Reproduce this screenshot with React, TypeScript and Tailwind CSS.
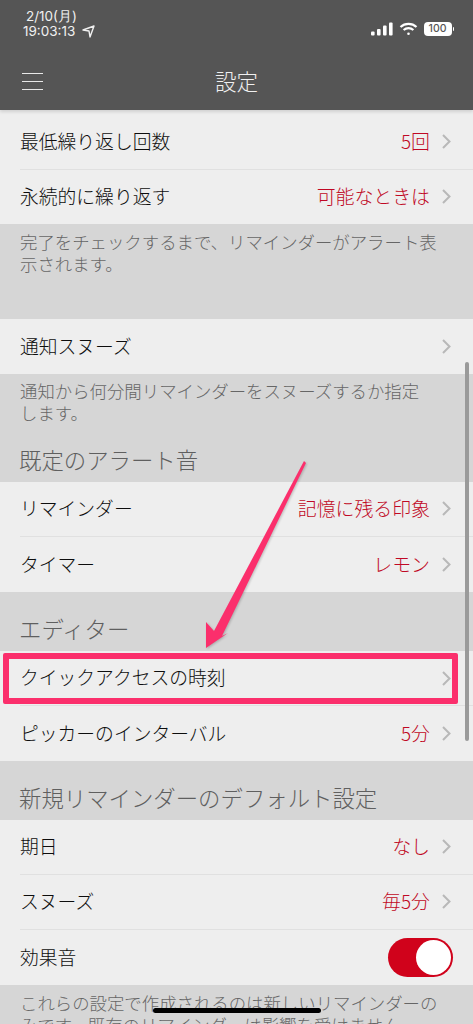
const jp = "font-['Noto_Sans_CJK_JP','Noto_Sans',sans-serif]";

const Chevron = () => (
  <svg width="9" height="15" viewBox="0 0 9 15" fill="none" stroke="#b8b8b8" strokeWidth="2">
    <path d="M1 1 L7.5 7.5 L1 14" />
  </svg>
);

const Row = ({
  label,
  value,
  last,
  height = "h-[55px]",
}: {
  label: string;
  value?: string;
  last?: boolean;
  height?: string;
}) => (
  <div className="pl-5">
    <div
      className={`flex items-center justify-between pr-[22px] ${height} ${last ? "" : "border-b border-[#e0e0e0]"}`}
    >
      <span className="pb-px text-[18.8px] font-light text-[#0d0d0d]">{label}</span>
      <div className="flex items-center gap-[12px]">
        {value && <span className="pb-px text-[18.9px] font-light text-[#c00824]">{value}</span>}
        <Chevron />
      </div>
    </div>
  </div>
);

const Group = ({ children, className = "" }: { children: React.ReactNode; className?: string }) => (
  <div className={`bg-[#eeeeee] ${className}`}>{children}</div>
);

const Note = ({ children, className }: { children: React.ReactNode; className: string }) => (
  <p className={`px-5 text-[17.4px] font-light leading-[21.5px] text-[#666666] ${className}`}>{children}</p>
);

const Heading = ({ children, className }: { children: React.ReactNode; className: string }) => (
  <h2 className={`pl-[19px] text-[22.4px] font-light leading-[30px] text-[#5f5f5f] ${className}`}>{children}</h2>
);

export default function App() {
  return (
    <div className={`relative h-[1024px] w-[473px] overflow-hidden bg-[#d6d6d6] ${jp}`}>
      <header className="relative z-10 h-[110px] bg-[#555555] text-white shadow-[0_2px_3px_rgba(0,0,0,0.12)]">
        <div className="flex items-start justify-between pl-[23px] pr-[19px] pt-[9px]">
          <div className="font-['Inter',sans-serif] text-[13.5px] leading-[15px] text-[#f0f0f0]">
            <div className="pl-[3px]">2/10(月)</div>
            <div className="flex items-center gap-[7px]">
              19:03:13
              <svg width="13" height="13" viewBox="0 0 13 13" fill="none" stroke="#f0f0f0" strokeWidth="1.4">
                <path d="M1 5 L12 1 L8 12 L7 6 Z" strokeLinejoin="round" />
              </svg>
            </div>
          </div>
          <div className="mt-[13px] flex items-center gap-[6px]">
            <svg width="22" height="14" viewBox="0 0 22 14" fill="#ffffff">
              <rect x="0" y="9.5" width="3.6" height="4" rx="1" />
              <rect x="6" y="7" width="3.6" height="6.5" rx="1" />
              <rect x="12" y="3.5" width="3.6" height="10" rx="1" />
              <rect x="18" y="0.5" width="3.6" height="13" rx="1" />
            </svg>
            <svg width="19" height="14" viewBox="0 0 19 14" fill="none" stroke="#ffffff" strokeWidth="2.2">
              <path d="M1.5 5 C6 0.8 13 0.8 17.5 5" />
              <path d="M4.6 8 C7.4 5.6 11.6 5.6 14.4 8" />
              <circle cx="9.5" cy="11.8" r="1.3" fill="#ffffff" stroke="none" />
            </svg>
            <div className="flex items-center">
              <div className="flex h-[14px] w-[28px] items-center justify-center rounded-[4px] bg-white font-['Inter',sans-serif] text-[10.5px] font-medium text-[#555555]">
                100
              </div>
              <div className="ml-px h-[4px] w-[1.5px] rounded-r-sm bg-white" />
            </div>
          </div>
        </div>
        <div className="relative mt-[27px] flex h-[30px] items-center justify-center">
          <div className="absolute left-[22px] top-[7px] flex w-[21px] flex-col gap-[7px]">
            <div className="h-px bg-[#e8e8e8]" />
            <div className="h-px bg-[#e8e8e8]" />
            <div className="h-px bg-[#e8e8e8]" />
          </div>
          <h1 className="text-[21.5px] font-light text-[#f0f0f0]">設定</h1>
        </div>
      </header>

      <Group className="pt-[5px]">
        <Row label="最低繰り返し回数" value="5回" />
        <Row label="永続的に繰り返す" value="可能なときは" last height="h-[54px]" />
      </Group>
      <Note className="h-[95px] pt-[7px]">
        完了をチェックするまで、リマインダーがアラート表示されます。
      </Note>
      <Group>
        <Row label="通知スヌーズ" last />
      </Group>
      <Note className="h-[62px] pt-[6px]">
        通知から何分間リマインダーをスヌーズするか指定
        <br />
        します。
      </Note>
      <Heading className="h-[46px] pt-[8px]">既定のアラート音</Heading>
      <Group>
        <Row label="リマインダー" value="記憶に残る印象" />
        <Row label="タイマー" value="レモン" last />
      </Group>
      <Heading className="h-[59px] pt-[21px]">エディター</Heading>
      <Group>
        <Row label="クイックアクセスの時刻" />
        <Row label="ピッカーのインターバル" value="5分" last />
      </Group>
      <Heading className="h-[59px] pt-[21px]">新規リマインダーのデフォルト設定</Heading>
      <Group>
        <Row label="期日" value="なし" />
        <Row label="スヌーズ" value="毎5分" />
        <div className="flex h-[55px] items-center justify-between pl-5 pr-[20px]">
          <span className="pb-px text-[18.8px] font-light text-[#0d0d0d]">効果音</span>
          <div className="flex h-[39px] w-[65px] items-center justify-end rounded-full bg-[#d0021b] pr-[2px]">
            <div className="h-[35px] w-[35px] rounded-full bg-white" />
          </div>
        </div>
      </Group>
      <Note className="pt-[7px]">
        これらの設定で作成されるのは新しいリマインダーのみです。既存のリマインダーは影響を受けません。
      </Note>

      {/* annotation */}
      <div className="absolute left-[3px] top-[653px] h-[51px] w-[455px] rounded-[2px] border-[6px] border-[#fb2f6c]" />
      <svg className="absolute left-0 top-0 drop-shadow-[1px_1px_1px_rgba(0,0,0,0.2)]" width="473" height="1024" viewBox="0 0 473 1024">
        <path d="M304 461 L306 463 L222 636 L228 633 L206 648 L206 622 L214 631 Z" fill="#fb2f6c" />
      </svg>

      {/* scrollbar */}
      <div className="absolute left-[465px] top-[362px] h-[379px] w-[4px] rounded-full bg-[#9a9a9a]" />
      {/* home indicator */}
      <div className="absolute left-[153px] top-[1008px] h-[5px] w-[168px] rounded-full bg-black" />
    </div>
  );
}
